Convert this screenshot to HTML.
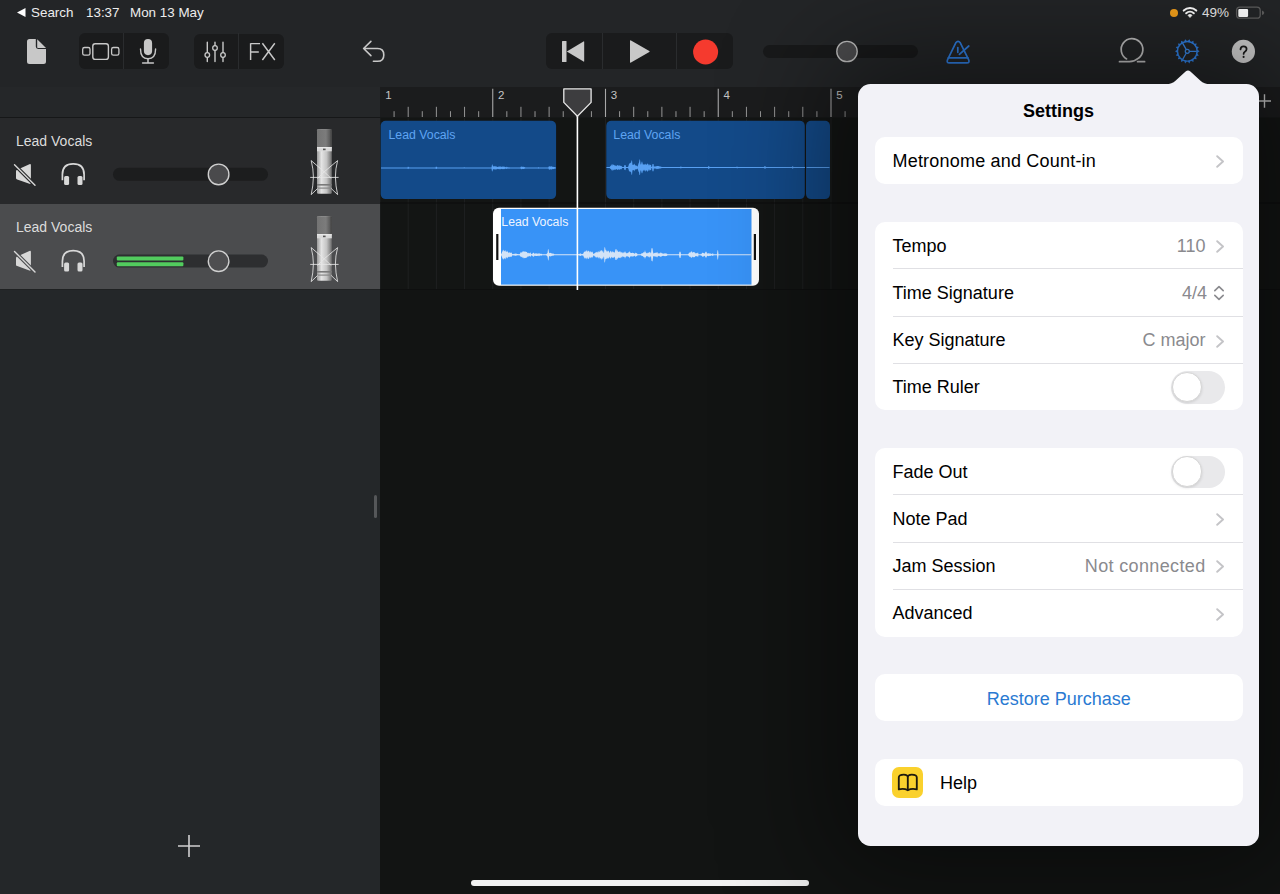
<!DOCTYPE html>
<html><head><meta charset="utf-8">
<style>
*{box-sizing:border-box;margin:0;padding:0}
html,body{width:1280px;height:894px;overflow:hidden;background:#161718;font-family:"Liberation Sans",sans-serif}
.a{position:absolute}
#top{left:0;top:0;width:1280px;height:87px;background:#232527}
#left{left:0;top:87px;width:380px;height:807px;background:#242729}
#tl{left:380px;top:87px;width:900px;height:807px;background:#121413}
.st{color:#ededed;font-size:13.4px;top:4.7px;white-space:nowrap}
.grp{background:#1a1b1c;border-radius:6px}
.div{background:#2a2c2e;width:1px}
.txt{white-space:nowrap}
</style></head><body>
<div id="top" class="a"></div>
<div id="left" class="a"></div>
<div id="tl" class="a"></div>

<!-- status bar -->
<svg class="a" style="left:17px;top:8px" width="9" height="9" viewBox="0 0 9 9"><path d="M0 4.5 L8.5 0 L8.5 9 Z" fill="#fff"/></svg>
<div class="a st" style="left:31px">Search</div>
<div class="a st" style="left:86px">13:37</div>
<div class="a st" style="left:130px">Mon 13 May</div>

<div class="a" style="left:1170px;top:9px;width:8px;height:8px;border-radius:50%;background:#f7a21b"></div>
<svg class="a" style="left:0;top:0" width="1280" height="24" viewBox="0 0 1280 24">
<path d="M1183.73 10.57 A9.2 9.2 0 0 1 1196.27 10.57" stroke="#fff" stroke-width="2" fill="none" stroke-linecap="round"/>
<path d="M1186.18 13.2 A5.6 5.6 0 0 1 1193.82 13.2" stroke="#fff" stroke-width="2" fill="none" stroke-linecap="round"/>
<path d="M1190 17.6 L1187.9 15.3 A3 3 0 0 1 1192.1 15.3 Z" fill="#fff" stroke="#fff" stroke-width="0.6" stroke-linejoin="round"/>
<rect x="1236.6" y="7.2" width="23.6" height="11" rx="3.3" stroke="#5e5e5e" stroke-width="1.3" fill="none"/>
<rect x="1238.3" y="8.9" width="9.8" height="8" rx="1.2" fill="#fff"/>
<path d="M1262 10.4 Q1264.2 11 1264.2 12.7 Q1264.2 14.4 1262 15 Z" fill="#5e5e5e"/>
</svg>
<div class="a st" style="left:1202px;font-size:13.5px;top:4.5px">49%</div>

<!-- toolbar -->
<svg class="a" style="left:0;top:0" width="1280" height="87" viewBox="0 0 1280 87">
<!-- doc -->
<path d="M29.5 39 H35.8 V46.6 Q35.8 49 38.2 49 H46 V61.5 Q46 64 43.5 64 H29.5 Q27 64 27 61.5 V41.5 Q27 39 29.5 39 Z" fill="#c8c8c8"/>
<path d="M37.2 39.3 L46 48 H38 Q37.2 48 37.2 47.2 Z" fill="#c8c8c8"/>
</svg>
<div class="a grp" style="left:79px;top:33px;width:90px;height:36px"></div>
<div class="a div" style="left:123px;top:33px;height:36px"></div>
<div class="a grp" style="left:194px;top:33.5px;width:90px;height:35.5px"></div>
<div class="a div" style="left:238px;top:33px;height:36px"></div>
<div class="a grp" style="left:546px;top:33px;width:187px;height:36px"></div>
<div class="a div" style="left:602px;top:33px;height:36px"></div>
<div class="a div" style="left:676px;top:33px;height:36px"></div>
<div class="a" style="left:763px;top:45px;width:155px;height:12.5px;border-radius:6.5px;background:#18191a"></div>
<svg class="a" style="left:0;top:0" width="1280" height="87" viewBox="0 0 1280 87">
<g stroke="#c8c8c8" fill="none">
<rect x="82.7" y="47.5" width="7.3" height="7.7" rx="1.8" stroke-width="1.3"/>
<rect x="92.8" y="43.8" width="15.6" height="15.6" rx="2.4" stroke-width="1.4"/>
<rect x="111.6" y="47.5" width="7.3" height="7.7" rx="1.8" stroke-width="1.3"/>
<path d="M140.5 49 Q140.5 58.7 148 58.7 Q155.6 58.7 155.6 49" stroke-width="1.4" stroke-linecap="round"/>
<path d="M148 58.7 V62.8 M142.6 63.1 H153.4" stroke-width="1.5" stroke-linecap="round"/>
<path d="M207.3 42.3 V61.5 M215 42.3 V61.5 M223 42.3 V61.5" stroke-width="1.4" stroke-linecap="round"/>
<path d="M250.6 43.2 V60 M250.6 43.6 H260 M250.6 51.9 H258.8 M262.4 43.2 L274.8 60 M274.8 43.2 L262.4 60" stroke-width="1.45"/>
<path d="M370.9 41.4 L363.6 48.5 L370.9 55.6 M363.6 48.5 H377.6 Q383.8 48.5 383.8 54.9 Q383.8 61.3 377.6 61.3 H373.4" stroke-width="1.6" stroke-linecap="round" stroke-linejoin="round"/>
</g>
<rect x="143.9" y="39" width="8.2" height="16.2" rx="4.1" fill="#c8c8c8"/>
<g fill="#1a1b1c" stroke="#c8c8c8" stroke-width="1.3">
<circle cx="207.3" cy="55" r="2.3"/>
<circle cx="215" cy="48" r="2.3"/>
<circle cx="223" cy="55" r="2.3"/>
</g>
<!-- transport -->
<rect x="562" y="41" width="4.5" height="21" rx="0.5" fill="#c8c8c8"/>
<path d="M566.8 51.5 L583.5 41.4 Q584.2 41.1 584.2 41.9 V61.1 Q584.2 61.9 583.5 61.6 Z" fill="#c8c8c8"/>
<path d="M630 41 Q630 39.9 631 40.5 L649.3 50.9 Q650.1 51.4 649.3 51.9 L631 62.5 Q630 63.1 630 62 Z" fill="#c8c8c8"/>
<circle cx="705.6" cy="52" r="12.5" fill="#f53a2e"/>
<circle cx="847" cy="51.5" r="10.2" fill="#4b4b4d" stroke="#bdbdbd" stroke-width="1.35"/>
<!-- metronome -->
<g stroke="#2f7ee0" fill="none" stroke-width="1.7" stroke-linecap="round" stroke-linejoin="round">
<path d="M955.8 42.8 Q958 39.9 960.3 42.8 L968.6 59.6 Q970 62.9 966.8 62.9 H949.4 Q946.2 62.9 947.6 59.6 Z"/>
<path d="M948.3 57.8 H967.9"/>
<path d="M957.8 47.5 V52.3"/>
<path d="M959.4 54.4 L968.8 46"/>
</g>
<!-- loop -->
<g stroke="#c0c0c0" fill="none" stroke-width="1.7" stroke-linecap="round">
<path d="M1126.6 58.9 A10.85 10.85 0 1 1 1138.5 58.2 Q1134.5 61.7 1129.5 61.7 H1119.5"/>
<path d="M1137.6 61.7 H1144.6"/>
</g>
<!-- gear -->
<path d="M1187.94 40.82 L1189.44 39.19 L1190.28 41.23 L1191.49 41.67 L1193.45 40.65 L1193.55 42.86 L1194.53 43.68 L1196.72 43.39 L1196.06 45.50 L1196.70 46.61 L1198.86 47.09 L1197.51 48.85 L1197.73 50.11 L1199.60 51.30 L1197.73 52.49 L1197.51 53.75 L1198.86 55.51 L1196.70 55.99 L1196.06 57.10 L1196.72 59.21 L1194.53 58.92 L1193.55 59.74 L1193.45 61.95 L1191.49 60.93 L1190.28 61.37 L1189.44 63.41 L1187.94 61.78 L1186.66 61.78 L1185.16 63.41 L1184.32 61.37 L1183.11 60.93 L1181.15 61.95 L1181.05 59.74 L1180.07 58.92 L1177.88 59.21 L1178.54 57.10 L1177.90 55.99 L1175.74 55.51 L1177.09 53.75 L1176.87 52.49 L1175.00 51.30 L1176.87 50.11 L1177.09 48.85 L1175.74 47.09 L1177.90 46.61 L1178.54 45.50 L1177.88 43.39 L1180.07 43.68 L1181.05 42.86 L1181.15 40.65 L1183.11 41.67 L1184.32 41.23 L1185.16 39.19 L1186.66 40.82 Z M1196.40 51.3 A9.1 9.1 0 1 0 1178.20 51.3 A9.1 9.1 0 1 0 1196.40 51.3 Z" fill="#2f7fe2" fill-rule="evenodd"/>
<g transform="translate(1187.3 51.3)" stroke="#3a88e6" fill="none">
<circle r="2.0" stroke-width="1.3"/>
<path d="M2.0 0 H9.4 M-1 -1.73 L-4.7 -8.15 M-1 1.73 L-4.7 8.15" stroke-width="1.3"/>
</g>
<circle cx="1243.4" cy="51.4" r="11.6" fill="#cdcdcd"/>
</svg>
<svg class="a" style="left:0;top:0" width="1280" height="87" viewBox="0 0 1280 87"><path d="M1240.5 49.4 Q1240.6 46.3 1243.6 46.3 Q1246.6 46.3 1246.6 49 Q1246.6 50.7 1244.9 51.7 Q1243.6 52.5 1243.6 53.9" stroke="#1a1a1a" stroke-width="1.75" fill="none" stroke-linecap="round"/><circle cx="1243.6" cy="56.9" r="1.05" fill="#1a1a1a"/></svg>

<!-- timeline -->
<div class="a" style="left:380px;top:87px;width:900px;height:30.5px;background:#1b1c1d"></div>
<svg class="a" style="left:0;top:0" width="1280" height="894" viewBox="0 0 1280 894">
<rect x="380" y="117.5" width="900" height="172" fill="#131514"/>
<path d="M380.00 118 V289" stroke="#1f2021" stroke-width="1"/><path d="M408.19 118 V289" stroke="#1f2021" stroke-width="1"/><path d="M436.38 118 V289" stroke="#1f2021" stroke-width="1"/><path d="M464.56 118 V289" stroke="#1f2021" stroke-width="1"/><path d="M492.75 118 V289" stroke="#1f2021" stroke-width="1"/><path d="M520.94 118 V289" stroke="#1f2021" stroke-width="1"/><path d="M549.12 118 V289" stroke="#1f2021" stroke-width="1"/><path d="M577.31 118 V289" stroke="#1f2021" stroke-width="1"/><path d="M605.50 118 V289" stroke="#1f2021" stroke-width="1"/><path d="M633.69 118 V289" stroke="#1f2021" stroke-width="1"/><path d="M661.88 118 V289" stroke="#1f2021" stroke-width="1"/><path d="M690.06 118 V289" stroke="#1f2021" stroke-width="1"/><path d="M718.25 118 V289" stroke="#1f2021" stroke-width="1"/><path d="M746.44 118 V289" stroke="#1f2021" stroke-width="1"/><path d="M774.62 118 V289" stroke="#1f2021" stroke-width="1"/><path d="M802.81 118 V289" stroke="#1f2021" stroke-width="1"/><path d="M831.00 118 V289" stroke="#1f2021" stroke-width="1"/><path d="M859.19 118 V289" stroke="#1f2021" stroke-width="1"/><path d="M887.38 118 V289" stroke="#1f2021" stroke-width="1"/><path d="M915.56 118 V289" stroke="#1f2021" stroke-width="1"/><path d="M943.75 118 V289" stroke="#1f2021" stroke-width="1"/><path d="M971.94 118 V289" stroke="#1f2021" stroke-width="1"/><path d="M1000.12 118 V289" stroke="#1f2021" stroke-width="1"/><path d="M1028.31 118 V289" stroke="#1f2021" stroke-width="1"/><path d="M1056.50 118 V289" stroke="#1f2021" stroke-width="1"/><path d="M1084.69 118 V289" stroke="#1f2021" stroke-width="1"/><path d="M1112.88 118 V289" stroke="#1f2021" stroke-width="1"/><path d="M1141.06 118 V289" stroke="#1f2021" stroke-width="1"/><path d="M1169.25 118 V289" stroke="#1f2021" stroke-width="1"/><path d="M1197.44 118 V289" stroke="#1f2021" stroke-width="1"/><path d="M1225.62 118 V289" stroke="#1f2021" stroke-width="1"/><path d="M1253.81 118 V289" stroke="#1f2021" stroke-width="1"/>
<path d="M380 203 H1280" stroke="#0c0d0d" stroke-width="1"/>
<path d="M380 289.5 H1280" stroke="#0e0f0f" stroke-width="1"/>
<path d="M394.09 111.2 V117" stroke="#959595" stroke-width="1"/><path d="M408.19 106.8 V117" stroke="#959595" stroke-width="1"/><path d="M422.28 111.2 V117" stroke="#959595" stroke-width="1"/><path d="M436.38 106.8 V117" stroke="#959595" stroke-width="1"/><path d="M450.47 111.2 V117" stroke="#959595" stroke-width="1"/><path d="M464.56 106.8 V117" stroke="#959595" stroke-width="1"/><path d="M478.66 111.2 V117" stroke="#959595" stroke-width="1"/><path d="M492.75 88.8 V117" stroke="#a8a8a8" stroke-width="1.1"/><path d="M506.84 111.2 V117" stroke="#959595" stroke-width="1"/><path d="M520.94 106.8 V117" stroke="#959595" stroke-width="1"/><path d="M535.03 111.2 V117" stroke="#959595" stroke-width="1"/><path d="M549.12 106.8 V117" stroke="#959595" stroke-width="1"/><path d="M563.22 111.2 V117" stroke="#959595" stroke-width="1"/><path d="M577.31 106.8 V117" stroke="#959595" stroke-width="1"/><path d="M591.41 111.2 V117" stroke="#959595" stroke-width="1"/><path d="M605.50 88.8 V117" stroke="#a8a8a8" stroke-width="1.1"/><path d="M619.59 111.2 V117" stroke="#959595" stroke-width="1"/><path d="M633.69 106.8 V117" stroke="#959595" stroke-width="1"/><path d="M647.78 111.2 V117" stroke="#959595" stroke-width="1"/><path d="M661.88 106.8 V117" stroke="#959595" stroke-width="1"/><path d="M675.97 111.2 V117" stroke="#959595" stroke-width="1"/><path d="M690.06 106.8 V117" stroke="#959595" stroke-width="1"/><path d="M704.16 111.2 V117" stroke="#959595" stroke-width="1"/><path d="M718.25 88.8 V117" stroke="#a8a8a8" stroke-width="1.1"/><path d="M732.34 111.2 V117" stroke="#959595" stroke-width="1"/><path d="M746.44 106.8 V117" stroke="#959595" stroke-width="1"/><path d="M760.53 111.2 V117" stroke="#959595" stroke-width="1"/><path d="M774.62 106.8 V117" stroke="#959595" stroke-width="1"/><path d="M788.72 111.2 V117" stroke="#959595" stroke-width="1"/><path d="M802.81 106.8 V117" stroke="#959595" stroke-width="1"/><path d="M816.91 111.2 V117" stroke="#959595" stroke-width="1"/><path d="M831.00 88.8 V117" stroke="#a8a8a8" stroke-width="1.1"/><path d="M845.09 111.2 V117" stroke="#959595" stroke-width="1"/><path d="M859.19 106.8 V117" stroke="#959595" stroke-width="1"/><path d="M873.28 111.2 V117" stroke="#959595" stroke-width="1"/><path d="M887.38 106.8 V117" stroke="#959595" stroke-width="1"/><path d="M901.47 111.2 V117" stroke="#959595" stroke-width="1"/><path d="M915.56 106.8 V117" stroke="#959595" stroke-width="1"/><path d="M929.66 111.2 V117" stroke="#959595" stroke-width="1"/><path d="M943.75 88.8 V117" stroke="#a8a8a8" stroke-width="1.1"/><path d="M957.84 111.2 V117" stroke="#959595" stroke-width="1"/><path d="M971.94 106.8 V117" stroke="#959595" stroke-width="1"/><path d="M986.03 111.2 V117" stroke="#959595" stroke-width="1"/><path d="M1000.12 106.8 V117" stroke="#959595" stroke-width="1"/><path d="M1014.22 111.2 V117" stroke="#959595" stroke-width="1"/><path d="M1028.31 106.8 V117" stroke="#959595" stroke-width="1"/><path d="M1042.41 111.2 V117" stroke="#959595" stroke-width="1"/><path d="M1056.50 88.8 V117" stroke="#a8a8a8" stroke-width="1.1"/><path d="M1070.59 111.2 V117" stroke="#959595" stroke-width="1"/><path d="M1084.69 106.8 V117" stroke="#959595" stroke-width="1"/><path d="M1098.78 111.2 V117" stroke="#959595" stroke-width="1"/><path d="M1112.88 106.8 V117" stroke="#959595" stroke-width="1"/><path d="M1126.97 111.2 V117" stroke="#959595" stroke-width="1"/><path d="M1141.06 106.8 V117" stroke="#959595" stroke-width="1"/><path d="M1155.16 111.2 V117" stroke="#959595" stroke-width="1"/><path d="M1169.25 88.8 V117" stroke="#a8a8a8" stroke-width="1.1"/><path d="M1183.34 111.2 V117" stroke="#959595" stroke-width="1"/><path d="M1197.44 106.8 V117" stroke="#959595" stroke-width="1"/><path d="M1211.53 111.2 V117" stroke="#959595" stroke-width="1"/><path d="M1225.62 106.8 V117" stroke="#959595" stroke-width="1"/><path d="M1239.72 111.2 V117" stroke="#959595" stroke-width="1"/>
<!-- regions -->
<rect x="380.7" y="120.8" width="175.4" height="78.3" rx="5" fill="#134a89"/>
<rect x="606.3" y="120.8" width="198.5" height="78.3" rx="5" fill="#134a89"/>
<rect x="806" y="120.8" width="24" height="78.3" rx="5" fill="#134a89"/>
<g fill="#58a0f2">
<path d="M381.0 167.4 L381.5 167.4 L382.0 167.4 L382.5 167.4 L383.0 167.4 L383.5 167.4 L384.0 167.4 L384.5 167.4 L385.0 167.4 L385.5 167.4 L386.0 167.4 L386.5 167.4 L387.0 167.4 L387.5 167.4 L388.0 167.4 L388.5 167.4 L389.0 167.4 L389.5 167.4 L390.0 167.4 L390.5 167.4 L391.0 167.4 L391.5 167.4 L392.0 167.4 L392.5 167.4 L393.0 167.4 L393.5 167.4 L394.0 167.4 L394.5 167.4 L395.0 167.4 L395.5 167.4 L396.0 167.4 L396.5 167.4 L397.0 167.4 L397.5 167.4 L398.0 167.4 L398.5 167.4 L399.0 167.4 L399.5 167.4 L400.0 167.4 L400.5 167.4 L401.0 167.4 L401.5 167.4 L402.0 167.4 L402.5 167.4 L403.0 167.4 L403.5 167.4 L404.0 167.4 L404.5 167.4 L405.0 167.4 L405.5 167.4 L406.0 167.4 L406.5 167.4 L407.0 167.4 L407.5 167.4 L408.0 166.5 L408.5 167.0 L409.0 167.3 L409.5 167.4 L410.0 167.4 L410.5 167.4 L411.0 167.4 L411.5 167.4 L412.0 167.4 L412.5 167.4 L413.0 167.4 L413.5 167.4 L414.0 167.4 L414.5 167.4 L415.0 167.4 L415.5 167.4 L416.0 167.4 L416.5 167.4 L417.0 167.4 L417.5 167.4 L418.0 167.4 L418.5 167.4 L419.0 167.4 L419.5 167.4 L420.0 167.4 L420.5 167.4 L421.0 167.4 L421.5 167.4 L422.0 167.4 L422.5 167.4 L423.0 167.4 L423.5 167.4 L424.0 167.4 L424.5 167.4 L425.0 167.4 L425.5 167.4 L426.0 167.4 L426.5 167.4 L427.0 167.4 L427.5 167.4 L428.0 167.4 L428.5 167.4 L429.0 167.4 L429.5 167.4 L430.0 167.4 L430.5 167.4 L431.0 167.4 L431.5 167.4 L432.0 167.4 L432.5 167.4 L433.0 167.4 L433.5 167.4 L434.0 167.4 L434.5 167.4 L435.0 167.4 L435.5 167.4 L436.0 166.6 L436.5 166.8 L437.0 167.3 L437.5 167.4 L438.0 167.4 L438.5 167.4 L439.0 167.4 L439.5 167.4 L440.0 167.4 L440.5 167.4 L441.0 167.4 L441.5 167.4 L442.0 167.4 L442.5 167.4 L443.0 167.4 L443.5 167.4 L444.0 167.4 L444.5 167.4 L445.0 167.4 L445.5 167.4 L446.0 167.4 L446.5 167.4 L447.0 167.4 L447.5 167.4 L448.0 167.4 L448.5 167.4 L449.0 167.4 L449.5 167.4 L450.0 167.4 L450.5 167.4 L451.0 167.4 L451.5 167.4 L452.0 167.4 L452.5 167.4 L453.0 167.4 L453.5 167.4 L454.0 167.4 L454.5 167.4 L455.0 167.4 L455.5 167.4 L456.0 167.4 L456.5 167.4 L457.0 167.4 L457.5 167.4 L458.0 167.4 L458.5 167.4 L459.0 167.4 L459.5 167.4 L460.0 167.4 L460.5 167.4 L461.0 167.4 L461.5 167.4 L462.0 167.4 L462.5 167.4 L463.0 167.4 L463.5 167.4 L464.0 167.2 L464.5 167.2 L465.0 167.4 L465.5 167.4 L466.0 167.4 L466.5 167.4 L467.0 167.4 L467.5 167.4 L468.0 167.4 L468.5 167.4 L469.0 167.4 L469.5 167.4 L470.0 167.4 L470.5 167.4 L471.0 167.4 L471.5 167.4 L472.0 167.4 L472.5 167.4 L473.0 167.4 L473.5 167.4 L474.0 167.4 L474.5 167.4 L475.0 167.4 L475.5 167.4 L476.0 167.4 L476.5 167.4 L477.0 167.4 L477.5 167.4 L478.0 167.4 L478.5 167.4 L479.0 167.4 L479.5 167.4 L480.0 167.4 L480.5 167.4 L481.0 167.4 L481.5 167.4 L482.0 167.4 L482.5 167.4 L483.0 167.4 L483.5 167.4 L484.0 167.4 L484.5 167.4 L485.0 167.4 L485.5 167.4 L486.0 167.4 L486.5 167.4 L487.0 167.4 L487.5 167.4 L488.0 167.4 L488.5 167.4 L489.0 167.4 L489.5 167.4 L490.0 167.4 L490.5 167.4 L491.0 167.4 L491.5 167.4 L492.0 164.4 L492.5 164.4 L493.0 166.6 L493.5 166.6 L494.0 165.8 L494.5 166.7 L495.0 165.8 L495.5 166.2 L496.0 167.0 L496.5 166.2 L497.0 166.7 L497.5 166.9 L498.0 166.9 L498.5 166.6 L499.0 166.8 L499.5 166.5 L500.0 166.4 L500.5 166.6 L501.0 166.8 L501.5 166.7 L502.0 167.1 L502.5 166.5 L503.0 166.6 L503.5 166.5 L504.0 166.9 L504.5 166.6 L505.0 167.1 L505.5 167.1 L506.0 167.4 L506.5 166.8 L507.0 166.8 L507.5 167.2 L508.0 167.3 L508.5 167.4 L509.0 166.9 L509.5 167.4 L510.0 167.4 L510.5 167.4 L511.0 167.4 L511.5 167.4 L512.0 167.4 L512.5 167.4 L513.0 167.4 L513.5 167.4 L514.0 167.4 L514.5 167.4 L515.0 167.4 L515.5 167.4 L516.0 167.4 L516.5 167.4 L517.0 167.4 L517.5 167.4 L518.0 167.4 L518.5 167.4 L519.0 167.4 L519.5 167.4 L520.0 167.4 L520.5 167.3 L521.0 166.4 L521.5 166.5 L522.0 166.9 L522.5 166.8 L523.0 166.8 L523.5 166.8 L524.0 166.9 L524.5 167.1 L525.0 167.2 L525.5 167.4 L526.0 167.4 L526.5 167.4 L527.0 167.4 L527.5 167.4 L528.0 167.4 L528.5 167.4 L529.0 167.4 L529.5 167.4 L530.0 167.4 L530.5 167.4 L531.0 167.4 L531.5 167.4 L532.0 167.4 L532.5 167.4 L533.0 167.4 L533.5 167.4 L534.0 167.4 L534.5 167.4 L535.0 167.4 L535.5 167.4 L536.0 167.4 L536.5 167.4 L537.0 167.4 L537.5 167.4 L538.0 167.4 L538.5 167.1 L539.0 167.4 L539.5 167.4 L540.0 167.4 L540.5 167.4 L541.0 167.4 L541.5 167.4 L542.0 167.4 L542.5 167.4 L543.0 167.4 L543.5 167.4 L544.0 167.4 L544.5 167.4 L545.0 167.4 L545.5 167.4 L546.0 167.4 L546.5 167.4 L547.0 167.4 L547.5 167.4 L548.0 167.4 L548.5 167.3 L549.0 166.1 L549.5 166.5 L550.0 166.5 L550.5 166.5 L551.0 166.5 L551.5 166.3 L552.0 166.4 L552.5 167.1 L553.0 166.6 L553.5 166.9 L554.0 167.0 L554.5 166.9 L555.0 167.3 L555.5 167.4 L556.0 167.2 L556.0 168.6 L555.5 168.5 L555.0 168.4 L554.5 168.8 L554.0 168.9 L553.5 168.9 L553.0 169.2 L552.5 168.8 L552.0 169.4 L551.5 169.4 L551.0 169.2 L550.5 169.3 L550.0 169.4 L549.5 169.4 L549.0 169.8 L548.5 168.4 L548.0 168.4 L547.5 168.4 L547.0 168.4 L546.5 168.4 L546.0 168.4 L545.5 168.4 L545.0 168.4 L544.5 168.4 L544.0 168.4 L543.5 168.4 L543.0 168.4 L542.5 168.4 L542.0 168.4 L541.5 168.4 L541.0 168.4 L540.5 168.4 L540.0 168.4 L539.5 168.4 L539.0 168.4 L538.5 168.7 L538.0 168.4 L537.5 168.4 L537.0 168.4 L536.5 168.4 L536.0 168.4 L535.5 168.4 L535.0 168.4 L534.5 168.4 L534.0 168.4 L533.5 168.4 L533.0 168.4 L532.5 168.4 L532.0 168.4 L531.5 168.4 L531.0 168.4 L530.5 168.4 L530.0 168.4 L529.5 168.4 L529.0 168.4 L528.5 168.4 L528.0 168.4 L527.5 168.4 L527.0 168.4 L526.5 168.4 L526.0 168.4 L525.5 168.4 L525.0 168.6 L524.5 168.7 L524.0 168.9 L523.5 169.1 L523.0 169.1 L522.5 169.1 L522.0 168.8 L521.5 169.3 L521.0 169.3 L520.5 168.6 L520.0 168.4 L519.5 168.4 L519.0 168.4 L518.5 168.4 L518.0 168.4 L517.5 168.4 L517.0 168.4 L516.5 168.4 L516.0 168.4 L515.5 168.4 L515.0 168.4 L514.5 168.4 L514.0 168.4 L513.5 168.4 L513.0 168.4 L512.5 168.4 L512.0 168.4 L511.5 168.4 L511.0 168.4 L510.5 168.4 L510.0 168.4 L509.5 168.4 L509.0 168.9 L508.5 168.4 L508.0 168.5 L507.5 168.5 L507.0 168.9 L506.5 168.9 L506.0 168.4 L505.5 168.7 L505.0 168.7 L504.5 169.3 L504.0 168.8 L503.5 169.3 L503.0 169.1 L502.5 169.2 L502.0 168.8 L501.5 169.1 L501.0 169.1 L500.5 169.2 L500.0 169.3 L499.5 169.3 L499.0 169.1 L498.5 169.3 L498.0 168.8 L497.5 168.9 L497.0 169.2 L496.5 169.5 L496.0 168.9 L495.5 169.5 L495.0 169.8 L494.5 169.1 L494.0 169.8 L493.5 169.1 L493.0 169.2 L492.5 171.2 L492.0 171.6 L491.5 168.4 L491.0 168.4 L490.5 168.4 L490.0 168.4 L489.5 168.4 L489.0 168.4 L488.5 168.4 L488.0 168.4 L487.5 168.4 L487.0 168.4 L486.5 168.4 L486.0 168.4 L485.5 168.4 L485.0 168.4 L484.5 168.4 L484.0 168.4 L483.5 168.4 L483.0 168.4 L482.5 168.4 L482.0 168.4 L481.5 168.4 L481.0 168.4 L480.5 168.4 L480.0 168.4 L479.5 168.4 L479.0 168.4 L478.5 168.4 L478.0 168.4 L477.5 168.4 L477.0 168.4 L476.5 168.4 L476.0 168.4 L475.5 168.4 L475.0 168.4 L474.5 168.4 L474.0 168.4 L473.5 168.4 L473.0 168.4 L472.5 168.4 L472.0 168.4 L471.5 168.4 L471.0 168.4 L470.5 168.4 L470.0 168.4 L469.5 168.4 L469.0 168.4 L468.5 168.4 L468.0 168.4 L467.5 168.4 L467.0 168.4 L466.5 168.4 L466.0 168.4 L465.5 168.4 L465.0 168.4 L464.5 168.6 L464.0 168.5 L463.5 168.4 L463.0 168.4 L462.5 168.4 L462.0 168.4 L461.5 168.4 L461.0 168.4 L460.5 168.4 L460.0 168.4 L459.5 168.4 L459.0 168.4 L458.5 168.4 L458.0 168.4 L457.5 168.4 L457.0 168.4 L456.5 168.4 L456.0 168.4 L455.5 168.4 L455.0 168.4 L454.5 168.4 L454.0 168.4 L453.5 168.4 L453.0 168.4 L452.5 168.4 L452.0 168.4 L451.5 168.4 L451.0 168.4 L450.5 168.4 L450.0 168.4 L449.5 168.4 L449.0 168.4 L448.5 168.4 L448.0 168.4 L447.5 168.4 L447.0 168.4 L446.5 168.4 L446.0 168.4 L445.5 168.4 L445.0 168.4 L444.5 168.4 L444.0 168.4 L443.5 168.4 L443.0 168.4 L442.5 168.4 L442.0 168.4 L441.5 168.4 L441.0 168.4 L440.5 168.4 L440.0 168.4 L439.5 168.4 L439.0 168.4 L438.5 168.4 L438.0 168.4 L437.5 168.4 L437.0 168.4 L436.5 169.0 L436.0 169.1 L435.5 168.4 L435.0 168.4 L434.5 168.4 L434.0 168.4 L433.5 168.4 L433.0 168.4 L432.5 168.4 L432.0 168.4 L431.5 168.4 L431.0 168.4 L430.5 168.4 L430.0 168.4 L429.5 168.4 L429.0 168.4 L428.5 168.4 L428.0 168.4 L427.5 168.4 L427.0 168.4 L426.5 168.4 L426.0 168.4 L425.5 168.4 L425.0 168.4 L424.5 168.4 L424.0 168.4 L423.5 168.4 L423.0 168.4 L422.5 168.4 L422.0 168.4 L421.5 168.4 L421.0 168.4 L420.5 168.4 L420.0 168.4 L419.5 168.4 L419.0 168.4 L418.5 168.4 L418.0 168.4 L417.5 168.4 L417.0 168.4 L416.5 168.4 L416.0 168.4 L415.5 168.4 L415.0 168.4 L414.5 168.4 L414.0 168.4 L413.5 168.4 L413.0 168.4 L412.5 168.4 L412.0 168.4 L411.5 168.4 L411.0 168.4 L410.5 168.4 L410.0 168.4 L409.5 168.4 L409.0 168.4 L408.5 168.8 L408.0 169.3 L407.5 168.4 L407.0 168.4 L406.5 168.4 L406.0 168.4 L405.5 168.4 L405.0 168.4 L404.5 168.4 L404.0 168.4 L403.5 168.4 L403.0 168.4 L402.5 168.4 L402.0 168.4 L401.5 168.4 L401.0 168.4 L400.5 168.4 L400.0 168.4 L399.5 168.4 L399.0 168.4 L398.5 168.4 L398.0 168.4 L397.5 168.4 L397.0 168.4 L396.5 168.4 L396.0 168.4 L395.5 168.4 L395.0 168.4 L394.5 168.4 L394.0 168.4 L393.5 168.4 L393.0 168.4 L392.5 168.4 L392.0 168.4 L391.5 168.4 L391.0 168.4 L390.5 168.4 L390.0 168.4 L389.5 168.4 L389.0 168.4 L388.5 168.4 L388.0 168.4 L387.5 168.4 L387.0 168.4 L386.5 168.4 L386.0 168.4 L385.5 168.4 L385.0 168.4 L384.5 168.4 L384.0 168.4 L383.5 168.4 L383.0 168.4 L382.5 168.4 L382.0 168.4 L381.5 168.4 L381.0 168.4 Z"/>
<path d="M606.5 167.0 L607.0 167.0 L607.5 167.0 L608.0 167.0 L608.5 167.0 L609.0 167.0 L609.5 166.9 L610.0 166.7 L610.5 165.8 L611.0 165.7 L611.5 164.1 L612.0 166.0 L612.5 164.6 L613.0 164.1 L613.5 165.1 L614.0 165.1 L614.5 165.6 L615.0 165.2 L615.5 165.5 L616.0 166.2 L616.5 166.1 L617.0 165.0 L617.5 165.1 L618.0 165.7 L618.5 165.5 L619.0 165.5 L619.5 165.4 L620.0 165.6 L620.5 165.7 L621.0 166.2 L621.5 165.7 L622.0 166.8 L622.5 167.0 L623.0 167.0 L623.5 167.0 L624.0 167.0 L624.5 165.0 L625.0 165.0 L625.5 165.0 L626.0 166.9 L626.5 166.9 L627.0 166.9 L627.5 167.0 L628.0 167.0 L628.5 165.7 L629.0 164.0 L629.5 163.2 L630.0 163.6 L630.5 162.6 L631.0 163.1 L631.5 160.5 L632.0 160.5 L632.5 164.9 L633.0 164.7 L633.5 164.7 L634.0 164.6 L634.5 163.4 L635.0 165.6 L635.5 165.5 L636.0 165.1 L636.5 165.9 L637.0 165.8 L637.5 166.7 L638.0 165.3 L638.5 163.6 L639.0 162.5 L639.5 159.5 L640.0 159.5 L640.5 164.0 L641.0 164.7 L641.5 162.4 L642.0 161.2 L642.5 163.0 L643.0 164.9 L643.5 163.7 L644.0 165.3 L644.5 163.8 L645.0 165.1 L645.5 163.4 L646.0 164.7 L646.5 164.5 L647.0 164.6 L647.5 163.3 L648.0 164.1 L648.5 164.4 L649.0 165.7 L649.5 164.4 L650.0 164.6 L650.5 165.1 L651.0 165.0 L651.5 167.0 L652.0 167.0 L652.5 164.0 L653.0 164.0 L653.5 164.0 L654.0 167.0 L654.5 166.5 L655.0 165.8 L655.5 166.5 L656.0 166.7 L656.5 165.9 L657.0 165.9 L657.5 166.1 L658.0 165.9 L658.5 166.1 L659.0 166.3 L659.5 166.3 L660.0 166.7 L660.5 166.4 L661.0 166.5 L661.5 167.0 L662.0 167.0 L662.5 167.0 L663.0 167.0 L663.5 167.0 L664.0 167.0 L664.5 167.0 L665.0 167.0 L665.5 167.0 L666.0 167.0 L666.5 167.0 L667.0 167.0 L667.5 167.0 L668.0 167.0 L668.5 167.0 L669.0 167.0 L669.5 167.0 L670.0 167.0 L670.5 167.0 L671.0 167.0 L671.5 167.0 L672.0 167.0 L672.5 167.0 L673.0 167.0 L673.5 167.0 L674.0 167.0 L674.5 167.0 L675.0 167.0 L675.5 167.0 L676.0 167.0 L676.5 167.0 L677.0 167.0 L677.5 167.0 L678.0 167.0 L678.5 167.0 L679.0 167.0 L679.5 167.0 L680.0 167.0 L680.5 166.5 L681.0 166.8 L681.5 166.7 L682.0 167.0 L682.5 167.0 L683.0 167.0 L683.5 167.0 L684.0 167.0 L684.5 167.0 L685.0 167.0 L685.5 167.0 L686.0 167.0 L686.5 167.0 L687.0 167.0 L687.5 167.0 L688.0 167.0 L688.5 167.0 L689.0 167.0 L689.5 167.0 L690.0 167.0 L690.5 167.0 L691.0 167.0 L691.5 167.0 L692.0 167.0 L692.5 167.0 L693.0 167.0 L693.5 167.0 L694.0 167.0 L694.5 167.0 L695.0 167.0 L695.5 167.0 L696.0 167.0 L696.5 167.0 L697.0 167.0 L697.5 167.0 L698.0 167.0 L698.5 167.0 L699.0 167.0 L699.5 167.0 L700.0 167.0 L700.5 167.0 L701.0 167.0 L701.5 167.0 L702.0 167.0 L702.5 167.0 L703.0 167.0 L703.5 167.0 L704.0 167.0 L704.5 167.0 L705.0 167.0 L705.5 167.0 L706.0 167.0 L706.5 167.0 L707.0 167.0 L707.5 167.0 L708.0 167.0 L708.5 165.8 L709.0 166.4 L709.5 166.8 L710.0 167.0 L710.5 167.0 L711.0 167.0 L711.5 167.0 L712.0 167.0 L712.5 167.0 L713.0 167.0 L713.5 167.0 L714.0 167.0 L714.5 167.0 L715.0 167.0 L715.5 167.0 L716.0 167.0 L716.5 167.0 L717.0 167.0 L717.5 167.0 L718.0 167.0 L718.5 167.0 L719.0 167.0 L719.5 167.0 L720.0 167.0 L720.5 167.0 L721.0 167.0 L721.5 167.0 L722.0 167.0 L722.5 167.0 L723.0 167.0 L723.5 167.0 L724.0 167.0 L724.5 167.0 L725.0 167.0 L725.5 167.0 L726.0 167.0 L726.5 167.0 L727.0 167.0 L727.5 167.0 L728.0 167.0 L728.5 167.0 L729.0 167.0 L729.5 167.0 L730.0 167.0 L730.5 167.0 L731.0 167.0 L731.5 167.0 L732.0 167.0 L732.5 167.0 L733.0 167.0 L733.5 167.0 L734.0 167.0 L734.5 167.0 L735.0 167.0 L735.5 167.0 L736.0 167.0 L736.5 166.8 L737.0 166.8 L737.5 166.7 L738.0 167.0 L738.5 167.0 L739.0 167.0 L739.5 167.0 L740.0 167.0 L740.5 167.0 L741.0 167.0 L741.5 167.0 L742.0 167.0 L742.5 167.0 L743.0 167.0 L743.5 167.0 L744.0 167.0 L744.5 167.0 L745.0 167.0 L745.5 167.0 L746.0 167.0 L746.5 167.0 L747.0 167.0 L747.5 167.0 L748.0 167.0 L748.5 167.0 L749.0 167.0 L749.5 167.0 L750.0 167.0 L750.5 167.0 L751.0 167.0 L751.5 167.0 L752.0 167.0 L752.5 167.0 L753.0 167.0 L753.5 167.0 L754.0 167.0 L754.5 167.0 L755.0 167.0 L755.5 167.0 L756.0 167.0 L756.5 167.0 L757.0 167.0 L757.5 167.0 L758.0 167.0 L758.5 167.0 L759.0 167.0 L759.5 167.0 L760.0 167.0 L760.5 167.0 L761.0 167.0 L761.5 167.0 L762.0 167.0 L762.5 167.0 L763.0 167.0 L763.5 167.0 L764.0 167.0 L764.5 166.3 L765.0 166.1 L765.5 166.5 L766.0 167.0 L766.5 167.0 L767.0 167.0 L767.5 167.0 L768.0 167.0 L768.5 167.0 L769.0 167.0 L769.5 167.0 L770.0 167.0 L770.5 167.0 L771.0 167.0 L771.5 167.0 L772.0 167.0 L772.5 167.0 L773.0 167.0 L773.5 167.0 L774.0 167.0 L774.5 167.0 L775.0 167.0 L775.5 167.0 L776.0 167.0 L776.5 167.0 L777.0 167.0 L777.5 167.0 L778.0 167.0 L778.5 167.0 L779.0 167.0 L779.5 167.0 L780.0 167.0 L780.5 167.0 L781.0 167.0 L781.5 167.0 L782.0 167.0 L782.5 167.0 L783.0 167.0 L783.5 167.0 L784.0 167.0 L784.5 167.0 L785.0 167.0 L785.5 167.0 L786.0 167.0 L786.5 167.0 L787.0 167.0 L787.5 167.0 L788.0 167.0 L788.5 167.0 L789.0 167.0 L789.5 167.0 L790.0 167.0 L790.5 167.0 L791.0 167.0 L791.5 167.0 L792.0 167.0 L792.5 166.0 L793.0 166.5 L793.5 167.0 L794.0 167.0 L794.5 167.0 L795.0 167.0 L795.5 167.0 L796.0 167.0 L796.5 167.0 L797.0 167.0 L797.5 167.0 L798.0 167.0 L798.5 167.0 L799.0 167.0 L799.5 167.0 L800.0 167.0 L800.5 167.0 L801.0 167.0 L801.5 167.0 L802.0 167.0 L802.5 167.0 L803.0 167.0 L803.5 167.0 L804.0 167.0 L804.5 167.0 L805.0 167.0 L805.0 168.0 L804.5 168.0 L804.0 168.0 L803.5 168.0 L803.0 168.0 L802.5 168.0 L802.0 168.0 L801.5 168.0 L801.0 168.0 L800.5 168.0 L800.0 168.0 L799.5 168.0 L799.0 168.0 L798.5 168.0 L798.0 168.0 L797.5 168.0 L797.0 168.0 L796.5 168.0 L796.0 168.0 L795.5 168.0 L795.0 168.0 L794.5 168.0 L794.0 168.0 L793.5 168.0 L793.0 168.4 L792.5 168.8 L792.0 168.0 L791.5 168.0 L791.0 168.0 L790.5 168.0 L790.0 168.0 L789.5 168.0 L789.0 168.0 L788.5 168.0 L788.0 168.0 L787.5 168.0 L787.0 168.0 L786.5 168.0 L786.0 168.0 L785.5 168.0 L785.0 168.0 L784.5 168.0 L784.0 168.0 L783.5 168.0 L783.0 168.0 L782.5 168.0 L782.0 168.0 L781.5 168.0 L781.0 168.0 L780.5 168.0 L780.0 168.0 L779.5 168.0 L779.0 168.0 L778.5 168.0 L778.0 168.0 L777.5 168.0 L777.0 168.0 L776.5 168.0 L776.0 168.0 L775.5 168.0 L775.0 168.0 L774.5 168.0 L774.0 168.0 L773.5 168.0 L773.0 168.0 L772.5 168.0 L772.0 168.0 L771.5 168.0 L771.0 168.0 L770.5 168.0 L770.0 168.0 L769.5 168.0 L769.0 168.0 L768.5 168.0 L768.0 168.0 L767.5 168.0 L767.0 168.0 L766.5 168.0 L766.0 168.0 L765.5 168.5 L765.0 168.8 L764.5 168.6 L764.0 168.0 L763.5 168.0 L763.0 168.0 L762.5 168.0 L762.0 168.0 L761.5 168.0 L761.0 168.0 L760.5 168.0 L760.0 168.0 L759.5 168.0 L759.0 168.0 L758.5 168.0 L758.0 168.0 L757.5 168.0 L757.0 168.0 L756.5 168.0 L756.0 168.0 L755.5 168.0 L755.0 168.0 L754.5 168.0 L754.0 168.0 L753.5 168.0 L753.0 168.0 L752.5 168.0 L752.0 168.0 L751.5 168.0 L751.0 168.0 L750.5 168.0 L750.0 168.0 L749.5 168.0 L749.0 168.0 L748.5 168.0 L748.0 168.0 L747.5 168.0 L747.0 168.0 L746.5 168.0 L746.0 168.0 L745.5 168.0 L745.0 168.0 L744.5 168.0 L744.0 168.0 L743.5 168.0 L743.0 168.0 L742.5 168.0 L742.0 168.0 L741.5 168.0 L741.0 168.0 L740.5 168.0 L740.0 168.0 L739.5 168.0 L739.0 168.0 L738.5 168.0 L738.0 168.0 L737.5 168.3 L737.0 168.2 L736.5 168.1 L736.0 168.0 L735.5 168.0 L735.0 168.0 L734.5 168.0 L734.0 168.0 L733.5 168.0 L733.0 168.0 L732.5 168.0 L732.0 168.0 L731.5 168.0 L731.0 168.0 L730.5 168.0 L730.0 168.0 L729.5 168.0 L729.0 168.0 L728.5 168.0 L728.0 168.0 L727.5 168.0 L727.0 168.0 L726.5 168.0 L726.0 168.0 L725.5 168.0 L725.0 168.0 L724.5 168.0 L724.0 168.0 L723.5 168.0 L723.0 168.0 L722.5 168.0 L722.0 168.0 L721.5 168.0 L721.0 168.0 L720.5 168.0 L720.0 168.0 L719.5 168.0 L719.0 168.0 L718.5 168.0 L718.0 168.0 L717.5 168.0 L717.0 168.0 L716.5 168.0 L716.0 168.0 L715.5 168.0 L715.0 168.0 L714.5 168.0 L714.0 168.0 L713.5 168.0 L713.0 168.0 L712.5 168.0 L712.0 168.0 L711.5 168.0 L711.0 168.0 L710.5 168.0 L710.0 168.0 L709.5 168.2 L709.0 168.5 L708.5 169.2 L708.0 168.0 L707.5 168.0 L707.0 168.0 L706.5 168.0 L706.0 168.0 L705.5 168.0 L705.0 168.0 L704.5 168.0 L704.0 168.0 L703.5 168.0 L703.0 168.0 L702.5 168.0 L702.0 168.0 L701.5 168.0 L701.0 168.0 L700.5 168.0 L700.0 168.0 L699.5 168.0 L699.0 168.0 L698.5 168.0 L698.0 168.0 L697.5 168.0 L697.0 168.0 L696.5 168.0 L696.0 168.0 L695.5 168.0 L695.0 168.0 L694.5 168.0 L694.0 168.0 L693.5 168.0 L693.0 168.0 L692.5 168.0 L692.0 168.0 L691.5 168.0 L691.0 168.0 L690.5 168.0 L690.0 168.0 L689.5 168.0 L689.0 168.0 L688.5 168.0 L688.0 168.0 L687.5 168.0 L687.0 168.0 L686.5 168.0 L686.0 168.0 L685.5 168.0 L685.0 168.0 L684.5 168.0 L684.0 168.0 L683.5 168.0 L683.0 168.0 L682.5 168.0 L682.0 168.0 L681.5 168.3 L681.0 168.1 L680.5 168.5 L680.0 168.0 L679.5 168.0 L679.0 168.0 L678.5 168.0 L678.0 168.0 L677.5 168.0 L677.0 168.0 L676.5 168.0 L676.0 168.0 L675.5 168.0 L675.0 168.0 L674.5 168.0 L674.0 168.0 L673.5 168.0 L673.0 168.0 L672.5 168.0 L672.0 168.0 L671.5 168.0 L671.0 168.0 L670.5 168.0 L670.0 168.0 L669.5 168.0 L669.0 168.0 L668.5 168.0 L668.0 168.0 L667.5 168.0 L667.0 168.0 L666.5 168.0 L666.0 168.0 L665.5 168.0 L665.0 168.0 L664.5 168.0 L664.0 168.0 L663.5 168.0 L663.0 168.0 L662.5 168.0 L662.0 168.0 L661.5 168.0 L661.0 168.6 L660.5 168.6 L660.0 168.3 L659.5 168.7 L659.0 168.6 L658.5 168.7 L658.0 169.2 L657.5 168.8 L657.0 169.1 L656.5 169.2 L656.0 168.3 L655.5 168.5 L655.0 169.3 L654.5 168.5 L654.0 168.0 L653.5 171.2 L653.0 171.2 L652.5 171.2 L652.0 168.0 L651.5 168.0 L651.0 170.3 L650.5 170.1 L650.0 170.3 L649.5 170.7 L649.0 169.1 L648.5 170.4 L648.0 170.9 L647.5 171.9 L647.0 170.4 L646.5 170.4 L646.0 170.5 L645.5 172.0 L645.0 169.7 L644.5 171.2 L644.0 169.5 L643.5 171.1 L643.0 170.2 L642.5 172.5 L642.0 173.4 L641.5 172.5 L641.0 170.2 L640.5 170.8 L640.0 174.9 L639.5 175.0 L639.0 172.3 L638.5 171.6 L638.0 169.8 L637.5 168.4 L637.0 169.1 L636.5 169.1 L636.0 169.9 L635.5 169.3 L635.0 169.3 L634.5 171.4 L634.0 170.2 L633.5 170.1 L633.0 170.6 L632.5 169.9 L632.0 175.1 L631.5 174.6 L631.0 171.8 L630.5 172.3 L630.0 171.0 L629.5 171.8 L629.0 171.0 L628.5 169.2 L628.0 168.0 L627.5 168.0 L627.0 168.1 L626.5 168.1 L626.0 168.1 L625.5 170.2 L625.0 170.1 L624.5 170.0 L624.0 168.0 L623.5 168.0 L623.0 168.0 L622.5 168.0 L622.0 168.2 L621.5 169.4 L621.0 168.9 L620.5 169.2 L620.0 169.5 L619.5 169.7 L619.0 169.6 L618.5 169.6 L618.0 169.2 L617.5 170.1 L617.0 170.1 L616.5 168.9 L616.0 168.9 L615.5 169.7 L615.0 169.9 L614.5 169.5 L614.0 169.7 L613.5 169.7 L613.0 170.7 L612.5 170.6 L612.0 169.0 L611.5 170.7 L611.0 169.1 L610.5 169.1 L610.0 168.3 L609.5 168.1 L609.0 168.0 L608.5 168.0 L608.0 168.0 L607.5 168.0 L607.0 168.0 L606.5 168.0 Z"/>
<path d="M806.5 167.0 L807.0 167.0 L807.5 167.0 L808.0 167.0 L808.5 167.0 L809.0 167.0 L809.5 167.0 L810.0 167.0 L810.5 167.0 L811.0 167.0 L811.5 167.0 L812.0 167.0 L812.5 167.0 L813.0 167.0 L813.5 167.0 L814.0 167.0 L814.5 167.0 L815.0 167.0 L815.5 167.0 L816.0 167.0 L816.5 167.0 L817.0 167.0 L817.5 167.0 L818.0 167.0 L818.5 167.0 L819.0 167.0 L819.5 167.0 L820.0 167.0 L820.5 167.0 L821.0 167.0 L821.5 167.0 L822.0 167.0 L822.5 167.0 L823.0 167.0 L823.5 167.0 L824.0 167.0 L824.5 167.0 L825.0 167.0 L825.5 167.0 L826.0 167.0 L826.5 167.0 L827.0 167.0 L827.5 167.0 L828.0 167.0 L828.5 167.0 L829.0 167.0 L829.5 167.0 L829.5 168.0 L829.0 168.0 L828.5 168.0 L828.0 168.0 L827.5 168.0 L827.0 168.0 L826.5 168.0 L826.0 168.0 L825.5 168.0 L825.0 168.0 L824.5 168.0 L824.0 168.0 L823.5 168.0 L823.0 168.0 L822.5 168.0 L822.0 168.0 L821.5 168.0 L821.0 168.0 L820.5 168.0 L820.0 168.0 L819.5 168.0 L819.0 168.0 L818.5 168.0 L818.0 168.0 L817.5 168.0 L817.0 168.0 L816.5 168.0 L816.0 168.0 L815.5 168.0 L815.0 168.0 L814.5 168.0 L814.0 168.0 L813.5 168.0 L813.0 168.0 L812.5 168.0 L812.0 168.0 L811.5 168.0 L811.0 168.0 L810.5 168.0 L810.0 168.0 L809.5 168.0 L809.0 168.0 L808.5 168.0 L808.0 168.0 L807.5 168.0 L807.0 168.0 L806.5 168.0 Z"/>
</g>
<rect x="493" y="207.8" width="266" height="78" rx="6" fill="#ffffff"/>
<rect x="501" y="209" width="250.5" height="75.6" fill="#3893f7"/>
<rect x="496.2" y="234" width="2.2" height="26" fill="#111"/>
<rect x="753.8" y="234" width="2.2" height="26" fill="#111"/>
<path d="M501.0 254.2 L501.5 253.4 L502.0 252.2 L502.5 251.2 L503.0 250.0 L503.5 249.8 L504.0 251.4 L504.5 250.9 L505.0 250.6 L505.5 250.2 L506.0 252.2 L506.5 251.7 L507.0 250.5 L507.5 251.4 L508.0 252.2 L508.5 252.4 L509.0 253.2 L509.5 252.1 L510.0 252.5 L510.5 252.8 L511.0 252.9 L511.5 252.2 L512.0 253.6 L512.5 254.2 L513.0 254.0 L513.5 253.9 L514.0 253.8 L514.5 253.9 L515.0 253.6 L515.5 253.7 L516.0 253.6 L516.5 253.7 L517.0 254.0 L517.5 254.1 L518.0 254.1 L518.5 254.2 L519.0 254.0 L519.5 254.2 L520.0 253.7 L520.5 252.6 L521.0 251.9 L521.5 252.6 L522.0 252.7 L522.5 251.0 L523.0 252.3 L523.5 251.2 L524.0 250.9 L524.5 251.9 L525.0 251.3 L525.5 251.8 L526.0 251.7 L526.5 252.1 L527.0 251.9 L527.5 253.2 L528.0 252.8 L528.5 252.8 L529.0 253.6 L529.5 252.7 L530.0 253.7 L530.5 251.9 L531.0 253.6 L531.5 254.2 L532.0 253.9 L532.5 253.6 L533.0 253.1 L533.5 252.7 L534.0 252.7 L534.5 253.9 L535.0 253.4 L535.5 253.6 L536.0 253.3 L536.5 253.6 L537.0 253.4 L537.5 253.7 L538.0 253.6 L538.5 253.8 L539.0 253.1 L539.5 253.5 L540.0 254.0 L540.5 253.8 L541.0 253.8 L541.5 253.8 L542.0 254.2 L542.5 254.2 L543.0 254.2 L543.5 254.2 L544.0 254.2 L544.5 254.2 L545.0 254.2 L545.5 254.2 L546.0 254.2 L546.5 253.9 L547.0 253.4 L547.5 253.0 L548.0 249.2 L548.5 249.2 L549.0 252.6 L549.5 253.2 L550.0 253.1 L550.5 252.7 L551.0 253.2 L551.5 253.3 L552.0 253.6 L552.5 253.8 L553.0 253.3 L553.5 253.8 L554.0 254.1 L554.5 254.2 L555.0 254.2 L555.5 254.2 L556.0 254.2 L556.5 254.2 L557.0 254.2 L557.5 254.2 L558.0 254.2 L558.5 254.2 L559.0 254.2 L559.5 254.2 L560.0 254.2 L560.5 254.2 L561.0 254.2 L561.5 254.2 L562.0 254.2 L562.5 254.2 L563.0 254.2 L563.5 254.2 L564.0 254.2 L564.5 254.2 L565.0 254.2 L565.5 254.2 L566.0 254.2 L566.5 254.2 L567.0 254.2 L567.5 254.2 L568.0 254.2 L568.5 254.2 L569.0 254.2 L569.5 254.2 L570.0 254.2 L570.5 254.2 L571.0 254.2 L571.5 254.2 L572.0 254.2 L572.5 254.2 L573.0 254.2 L573.5 254.2 L574.0 254.2 L574.5 254.2 L575.0 254.2 L575.5 254.2 L576.0 254.2 L576.5 254.2 L577.0 254.2 L577.5 254.2 L578.0 254.2 L578.5 254.1 L579.0 253.9 L579.5 253.9 L580.0 253.3 L580.5 253.6 L581.0 253.8 L581.5 254.2 L582.0 253.8 L582.5 253.9 L583.0 254.1 L583.5 253.0 L584.0 251.9 L584.5 252.0 L585.0 250.4 L585.5 251.6 L586.0 251.7 L586.5 250.6 L587.0 249.9 L587.5 252.3 L588.0 250.4 L588.5 251.3 L589.0 250.6 L589.5 252.7 L590.0 251.1 L590.5 251.4 L591.0 252.6 L591.5 251.5 L592.0 252.8 L592.5 251.3 L593.0 252.9 L593.5 253.9 L594.0 254.1 L594.5 253.0 L595.0 253.2 L595.5 252.5 L596.0 251.9 L596.5 252.5 L597.0 251.4 L597.5 252.0 L598.0 252.9 L598.5 250.9 L599.0 251.8 L599.5 252.2 L600.0 250.1 L600.5 251.0 L601.0 251.4 L601.5 250.1 L602.0 250.2 L602.5 252.0 L603.0 250.2 L603.5 252.4 L604.0 253.1 L604.5 247.2 L605.0 247.2 L605.5 249.8 L606.0 250.4 L606.5 250.4 L607.0 252.2 L607.5 250.5 L608.0 251.8 L608.5 250.6 L609.0 251.2 L609.5 252.9 L610.0 252.0 L610.5 251.1 L611.0 250.7 L611.5 252.3 L612.0 252.4 L612.5 251.3 L613.0 251.4 L613.5 252.4 L614.0 251.4 L614.5 252.9 L615.0 251.8 L615.5 249.2 L616.0 249.2 L616.5 249.2 L617.0 251.9 L617.5 249.8 L618.0 251.5 L618.5 252.0 L619.0 251.8 L619.5 251.6 L620.0 251.5 L620.5 251.4 L621.0 252.9 L621.5 252.3 L622.0 251.7 L622.5 252.8 L623.0 253.4 L623.5 252.2 L624.0 252.5 L624.5 252.5 L625.0 250.9 L625.5 252.3 L626.0 252.9 L626.5 253.4 L627.0 252.5 L627.5 253.3 L628.0 253.0 L628.5 252.1 L629.0 252.8 L629.5 251.0 L630.0 252.3 L630.5 252.8 L631.0 253.1 L631.5 252.9 L632.0 253.1 L632.5 252.5 L633.0 253.2 L633.5 252.9 L634.0 253.1 L634.5 253.7 L635.0 253.7 L635.5 252.5 L636.0 253.0 L636.5 253.2 L637.0 253.2 L637.5 254.2 L638.0 254.2 L638.5 254.2 L639.0 254.2 L639.5 254.2 L640.0 254.2 L640.5 254.2 L641.0 254.1 L641.5 253.6 L642.0 253.1 L642.5 253.3 L643.0 253.3 L643.5 251.9 L644.0 252.5 L644.5 252.3 L645.0 250.1 L645.5 252.3 L646.0 252.5 L646.5 253.2 L647.0 253.3 L647.5 253.3 L648.0 252.2 L648.5 252.7 L649.0 253.0 L649.5 252.0 L650.0 251.8 L650.5 252.7 L651.0 253.5 L651.5 248.2 L652.0 248.2 L652.5 248.2 L653.0 252.0 L653.5 253.4 L654.0 253.5 L654.5 252.7 L655.0 252.9 L655.5 252.5 L656.0 253.0 L656.5 252.7 L657.0 251.8 L657.5 252.5 L658.0 253.7 L658.5 253.0 L659.0 253.8 L659.5 252.9 L660.0 253.5 L660.5 252.6 L661.0 252.6 L661.5 253.0 L662.0 253.4 L662.5 253.3 L663.0 253.7 L663.5 253.4 L664.0 253.7 L664.5 253.3 L665.0 253.5 L665.5 253.3 L666.0 253.4 L666.5 253.6 L667.0 253.7 L667.5 254.2 L668.0 254.2 L668.5 254.2 L669.0 254.2 L669.5 254.2 L670.0 254.2 L670.5 254.2 L671.0 254.2 L671.5 254.2 L672.0 254.2 L672.5 254.2 L673.0 254.2 L673.5 254.2 L674.0 254.2 L674.5 254.2 L675.0 254.2 L675.5 254.2 L676.0 254.2 L676.5 254.2 L677.0 254.2 L677.5 254.2 L678.0 254.2 L678.5 254.2 L679.0 254.2 L679.5 251.7 L680.0 251.7 L680.5 251.7 L681.0 254.2 L681.5 254.2 L682.0 254.2 L682.5 254.2 L683.0 254.2 L683.5 254.2 L684.0 254.2 L684.5 254.2 L685.0 254.2 L685.5 254.2 L686.0 254.2 L686.5 254.2 L687.0 254.2 L687.5 254.2 L688.0 254.2 L688.5 253.7 L689.0 253.1 L689.5 252.5 L690.0 252.5 L690.5 252.4 L691.0 251.5 L691.5 251.5 L692.0 251.5 L692.5 252.7 L693.0 252.5 L693.5 252.1 L694.0 252.1 L694.5 252.5 L695.0 252.6 L695.5 253.5 L696.0 253.3 L696.5 252.9 L697.0 253.6 L697.5 253.1 L698.0 252.3 L698.5 254.2 L699.0 254.2 L699.5 254.2 L700.0 254.2 L700.5 254.2 L701.0 253.6 L701.5 254.0 L702.0 253.2 L702.5 252.6 L703.0 252.9 L703.5 253.2 L704.0 252.8 L704.5 253.7 L705.0 253.2 L705.5 251.7 L706.0 251.7 L706.5 251.7 L707.0 253.7 L707.5 253.2 L708.0 253.5 L708.5 253.2 L709.0 253.3 L709.5 253.6 L710.0 253.8 L710.5 253.4 L711.0 253.6 L711.5 254.0 L712.0 253.9 L712.5 253.6 L713.0 253.3 L713.5 254.2 L714.0 254.2 L714.5 254.2 L715.0 254.2 L715.5 254.2 L716.0 254.2 L716.5 254.2 L717.0 254.2 L717.5 250.2 L718.0 250.2 L718.5 254.2 L719.0 254.2 L719.5 254.2 L720.0 254.2 L720.5 254.2 L721.0 254.2 L721.5 254.2 L722.0 254.2 L722.5 254.2 L723.0 254.2 L723.5 254.2 L724.0 254.2 L724.5 254.2 L725.0 254.2 L725.5 254.2 L726.0 254.2 L726.5 254.2 L727.0 254.2 L727.5 254.2 L728.0 254.2 L728.5 254.2 L729.0 254.2 L729.5 254.2 L730.0 254.2 L730.5 254.2 L731.0 254.2 L731.5 254.2 L732.0 254.2 L732.5 254.2 L733.0 254.2 L733.5 254.2 L734.0 254.2 L734.5 254.2 L735.0 254.2 L735.5 254.2 L736.0 254.2 L736.5 254.2 L737.0 254.2 L737.5 254.2 L738.0 254.2 L738.5 254.2 L739.0 254.2 L739.5 254.2 L740.0 254.2 L740.5 254.2 L741.0 254.2 L741.5 254.2 L742.0 254.2 L742.5 254.2 L743.0 254.2 L743.5 254.2 L744.0 254.2 L744.5 254.2 L745.0 254.2 L745.5 254.2 L746.0 254.2 L746.5 254.2 L747.0 254.2 L747.5 254.2 L748.0 254.2 L748.5 254.2 L749.0 254.2 L749.5 254.2 L750.0 254.2 L750.5 254.2 L751.0 254.2 L751.0 255.2 L750.5 255.2 L750.0 255.2 L749.5 255.2 L749.0 255.2 L748.5 255.2 L748.0 255.2 L747.5 255.2 L747.0 255.2 L746.5 255.2 L746.0 255.2 L745.5 255.2 L745.0 255.2 L744.5 255.2 L744.0 255.2 L743.5 255.2 L743.0 255.2 L742.5 255.2 L742.0 255.2 L741.5 255.2 L741.0 255.2 L740.5 255.2 L740.0 255.2 L739.5 255.2 L739.0 255.2 L738.5 255.2 L738.0 255.2 L737.5 255.2 L737.0 255.2 L736.5 255.2 L736.0 255.2 L735.5 255.2 L735.0 255.2 L734.5 255.2 L734.0 255.2 L733.5 255.2 L733.0 255.2 L732.5 255.2 L732.0 255.2 L731.5 255.2 L731.0 255.2 L730.5 255.2 L730.0 255.2 L729.5 255.2 L729.0 255.2 L728.5 255.2 L728.0 255.2 L727.5 255.2 L727.0 255.2 L726.5 255.2 L726.0 255.2 L725.5 255.2 L725.0 255.2 L724.5 255.2 L724.0 255.2 L723.5 255.2 L723.0 255.2 L722.5 255.2 L722.0 255.2 L721.5 255.2 L721.0 255.2 L720.5 255.2 L720.0 255.2 L719.5 255.2 L719.0 255.2 L718.5 255.2 L718.0 259.5 L717.5 259.5 L717.0 255.2 L716.5 255.2 L716.0 255.2 L715.5 255.2 L715.0 255.2 L714.5 255.2 L714.0 255.2 L713.5 255.2 L713.0 256.1 L712.5 255.8 L712.0 255.4 L711.5 255.3 L711.0 255.7 L710.5 256.1 L710.0 255.6 L709.5 255.9 L709.0 256.0 L708.5 256.2 L708.0 255.8 L707.5 256.1 L707.0 255.8 L706.5 257.6 L706.0 257.5 L705.5 257.5 L705.0 256.1 L704.5 255.7 L704.0 256.5 L703.5 256.2 L703.0 256.7 L702.5 256.8 L702.0 256.3 L701.5 255.4 L701.0 255.8 L700.5 255.2 L700.0 255.2 L699.5 255.2 L699.0 255.2 L698.5 255.2 L698.0 257.2 L697.5 256.4 L697.0 255.7 L696.5 256.6 L696.0 255.9 L695.5 256.0 L695.0 257.0 L694.5 257.0 L694.0 257.4 L693.5 257.2 L693.0 256.8 L692.5 256.8 L692.0 257.6 L691.5 257.7 L691.0 257.8 L690.5 256.8 L690.0 256.7 L689.5 256.8 L689.0 256.3 L688.5 255.6 L688.0 255.2 L687.5 255.2 L687.0 255.2 L686.5 255.2 L686.0 255.2 L685.5 255.2 L685.0 255.2 L684.5 255.2 L684.0 255.2 L683.5 255.2 L683.0 255.2 L682.5 255.2 L682.0 255.2 L681.5 255.2 L681.0 255.2 L680.5 257.9 L680.0 258.0 L679.5 257.8 L679.0 255.2 L678.5 255.2 L678.0 255.2 L677.5 255.2 L677.0 255.2 L676.5 255.2 L676.0 255.2 L675.5 255.2 L675.0 255.2 L674.5 255.2 L674.0 255.2 L673.5 255.2 L673.0 255.2 L672.5 255.2 L672.0 255.2 L671.5 255.2 L671.0 255.2 L670.5 255.2 L670.0 255.2 L669.5 255.2 L669.0 255.2 L668.5 255.2 L668.0 255.2 L667.5 255.2 L667.0 255.8 L666.5 255.9 L666.0 256.1 L665.5 256.2 L665.0 255.9 L664.5 256.2 L664.0 255.8 L663.5 255.9 L663.0 255.7 L662.5 255.9 L662.0 256.1 L661.5 256.4 L661.0 256.8 L660.5 256.9 L660.0 256.0 L659.5 256.5 L659.0 255.7 L658.5 256.3 L658.0 255.8 L657.5 256.9 L657.0 257.5 L656.5 256.7 L656.0 256.3 L655.5 256.7 L655.0 256.4 L654.5 256.6 L654.0 255.9 L653.5 256.0 L653.0 257.4 L652.5 261.8 L652.0 260.8 L651.5 260.9 L651.0 255.9 L650.5 256.5 L650.0 257.5 L649.5 257.4 L649.0 256.3 L648.5 256.7 L648.0 257.4 L647.5 256.0 L647.0 256.1 L646.5 256.1 L646.0 256.9 L645.5 257.3 L645.0 259.1 L644.5 257.2 L644.0 257.1 L643.5 257.3 L643.0 256.0 L642.5 256.0 L642.0 256.3 L641.5 255.7 L641.0 255.3 L640.5 255.2 L640.0 255.2 L639.5 255.2 L639.0 255.2 L638.5 255.2 L638.0 255.2 L637.5 255.2 L637.0 256.2 L636.5 256.1 L636.0 256.5 L635.5 257.0 L635.0 255.8 L634.5 255.7 L634.0 256.3 L633.5 256.4 L633.0 256.1 L632.5 256.8 L632.0 256.4 L631.5 256.5 L631.0 256.1 L630.5 256.5 L630.0 256.9 L629.5 258.4 L629.0 256.5 L628.5 257.1 L628.0 256.5 L627.5 256.0 L627.0 257.0 L626.5 256.0 L626.0 256.4 L625.5 257.2 L625.0 258.8 L624.5 256.8 L624.0 256.9 L623.5 257.1 L623.0 256.1 L622.5 256.6 L622.0 257.7 L621.5 257.2 L621.0 256.4 L620.5 258.2 L620.0 257.9 L619.5 257.8 L619.0 257.7 L618.5 257.4 L618.0 258.1 L617.5 259.5 L617.0 257.8 L616.5 260.0 L616.0 260.0 L615.5 259.9 L615.0 257.4 L614.5 256.5 L614.0 258.1 L613.5 257.2 L613.0 258.1 L612.5 258.0 L612.0 256.8 L611.5 257.1 L611.0 258.4 L610.5 258.4 L610.0 257.6 L609.5 256.6 L609.0 258.5 L608.5 258.5 L608.0 257.4 L607.5 259.1 L607.0 257.4 L606.5 259.0 L606.0 259.0 L605.5 259.1 L605.0 262.0 L604.5 262.8 L604.0 256.3 L603.5 257.2 L603.0 259.4 L602.5 257.5 L602.0 259.4 L601.5 259.5 L601.0 257.7 L600.5 258.3 L600.0 259.5 L599.5 257.2 L599.0 257.4 L598.5 258.7 L598.0 256.6 L597.5 257.3 L597.0 258.0 L596.5 256.9 L596.0 257.7 L595.5 256.9 L595.0 256.2 L594.5 256.4 L594.0 255.3 L593.5 255.6 L593.0 256.4 L592.5 257.9 L592.0 256.6 L591.5 258.0 L591.0 256.7 L590.5 258.0 L590.0 258.3 L589.5 256.6 L589.0 258.9 L588.5 258.4 L588.0 259.1 L587.5 256.9 L587.0 259.4 L586.5 258.6 L586.0 257.5 L585.5 257.9 L585.0 259.3 L584.5 257.7 L584.0 257.5 L583.5 256.3 L583.0 255.3 L582.5 255.4 L582.0 255.7 L581.5 255.2 L581.0 255.5 L580.5 255.9 L580.0 256.1 L579.5 255.4 L579.0 255.4 L578.5 255.3 L578.0 255.2 L577.5 255.2 L577.0 255.2 L576.5 255.2 L576.0 255.2 L575.5 255.2 L575.0 255.2 L574.5 255.2 L574.0 255.2 L573.5 255.2 L573.0 255.2 L572.5 255.2 L572.0 255.2 L571.5 255.2 L571.0 255.2 L570.5 255.2 L570.0 255.2 L569.5 255.2 L569.0 255.2 L568.5 255.2 L568.0 255.2 L567.5 255.2 L567.0 255.2 L566.5 255.2 L566.0 255.2 L565.5 255.2 L565.0 255.2 L564.5 255.2 L564.0 255.2 L563.5 255.2 L563.0 255.2 L562.5 255.2 L562.0 255.2 L561.5 255.2 L561.0 255.2 L560.5 255.2 L560.0 255.2 L559.5 255.2 L559.0 255.2 L558.5 255.2 L558.0 255.2 L557.5 255.2 L557.0 255.2 L556.5 255.2 L556.0 255.2 L555.5 255.2 L555.0 255.2 L554.5 255.2 L554.0 255.3 L553.5 255.5 L553.0 256.2 L552.5 255.5 L552.0 255.8 L551.5 256.0 L551.0 256.2 L550.5 256.6 L550.0 256.2 L549.5 256.1 L549.0 256.6 L548.5 260.7 L548.0 259.8 L547.5 256.5 L547.0 255.9 L546.5 255.6 L546.0 255.2 L545.5 255.2 L545.0 255.2 L544.5 255.2 L544.0 255.2 L543.5 255.2 L543.0 255.2 L542.5 255.2 L542.0 255.2 L541.5 255.7 L541.0 255.5 L540.5 255.6 L540.0 255.4 L539.5 255.8 L539.0 256.4 L538.5 255.5 L538.0 255.9 L537.5 255.8 L537.0 255.9 L536.5 255.9 L536.0 256.1 L535.5 255.8 L535.0 256.0 L534.5 255.6 L534.0 256.6 L533.5 256.7 L533.0 256.4 L532.5 255.9 L532.0 255.5 L531.5 255.2 L531.0 255.8 L530.5 257.2 L530.0 255.7 L529.5 256.6 L529.0 255.7 L528.5 256.8 L528.0 256.5 L527.5 256.4 L527.0 257.4 L526.5 257.4 L526.0 258.0 L525.5 257.8 L525.0 258.3 L524.5 257.7 L524.0 258.5 L523.5 258.1 L523.0 257.1 L522.5 258.2 L522.0 256.6 L521.5 256.9 L521.0 257.3 L520.5 256.6 L520.0 255.8 L519.5 255.2 L519.0 255.4 L518.5 255.2 L518.0 255.3 L517.5 255.2 L517.0 255.4 L516.5 255.6 L516.0 255.8 L515.5 255.8 L515.0 255.7 L514.5 255.5 L514.0 255.6 L513.5 255.4 L513.0 255.3 L512.5 255.2 L512.0 255.9 L511.5 257.1 L511.0 256.5 L510.5 256.8 L510.0 257.0 L509.5 257.2 L509.0 256.3 L508.5 257.2 L508.0 257.1 L507.5 258.1 L507.0 258.6 L506.5 257.4 L506.0 257.0 L505.5 259.5 L505.0 258.6 L504.5 258.6 L504.0 258.2 L503.5 259.7 L503.0 259.0 L502.5 258.5 L502.0 257.3 L501.5 256.0 L501.0 255.2 Z" fill="#d3e3f7"/>
<!-- playhead -->
<path d="M577.4 116 V290" stroke="#ffffff" stroke-width="1.6"/>
<path d="M563.8 88.9 H591.1 V102.4 L577.4 116.3 L563.8 102.4 Z" fill="#3d3d3f" stroke="#e8e8e8" stroke-width="1.3" stroke-linejoin="round"/>
</svg>
<div class="a txt" style="left:385.3px;top:89px;font-size:11.5px;color:#c4c4c4">1</div><div class="a txt" style="left:498.1px;top:89px;font-size:11.5px;color:#c4c4c4">2</div><div class="a txt" style="left:610.8px;top:89px;font-size:11.5px;color:#c4c4c4">3</div><div class="a txt" style="left:723.5px;top:89px;font-size:11.5px;color:#c4c4c4">4</div><div class="a txt" style="left:836.3px;top:89px;font-size:11.5px;color:#c4c4c4">5</div>
<div class="a txt" style="left:388.5px;top:127.7px;font-size:12.3px;color:#5fa4f2">Lead Vocals</div>
<div class="a txt" style="left:613.3px;top:127.7px;font-size:12.3px;color:#5fa4f2">Lead Vocals</div>
<div class="a txt" style="left:501.3px;top:214.5px;font-size:12.3px;color:#eef4ff">Lead Vocals</div>

<!-- left panel -->
<div class="a" style="left:0;top:87px;width:380px;height:30px;background:#252729"></div>
<div class="a" style="left:0;top:117px;width:380px;height:1px;background:#161718"></div>
<div class="a" style="left:0;top:118px;width:380px;height:85.5px;background:#28292b"></div>
<div class="a" style="left:0;top:203.5px;width:380px;height:85.5px;background:#4b4c4e"></div>
<div class="a" style="left:0;top:289px;width:380px;height:1px;background:#1f2122"></div>
<div class="a txt" style="left:16px;top:132.5px;font-size:14px;color:#dcdcdc">Lead Vocals</div>
<div class="a txt" style="left:16px;top:219px;font-size:14px;color:#dcdcdc">Lead Vocals</div>
<svg class="a" style="left:0;top:118px" width="380" height="172" viewBox="0 118 380 172">
<g id="mute1">
<path d="M16 171.2 Q16 170 17.2 169.8 L29.4 164.2 Q30.9 163.6 30.9 165.2 V182.8 Q30.9 184.4 29.4 183.8 L17.2 179.4 Q16 179.2 16 178 Z" fill="#d8d8d8"/>
<path d="M14.2 164.5 L35.2 185.6" stroke="#28292b" stroke-width="3.6"/>
<path d="M14.5 164.8 L35 185.3" stroke="#d8d8d8" stroke-width="1.4" stroke-linecap="round"/>
</g>
<g fill="none" stroke="#d8d8d8" stroke-width="1.7">
<path d="M62.4 180.3 V174.5 Q62.4 163.9 73.2 163.9 Q84.1 163.9 84.1 174.5 V180.3"/>
</g>
<rect x="64.1" y="175.9" width="5" height="9" rx="1.5" fill="#d8d8d8"/>
<rect x="77.5" y="175.9" width="5" height="9" rx="1.5" fill="#d8d8d8"/>
<g transform="translate(0 86.7)">
<path d="M16 171.2 Q16 170 17.2 169.8 L29.4 164.2 Q30.9 163.6 30.9 165.2 V182.8 Q30.9 184.4 29.4 183.8 L17.2 179.4 Q16 179.2 16 178 Z" fill="#d8d8d8"/>
<path d="M14.2 164.5 L35.2 185.6" stroke="#4b4c4e" stroke-width="3.6"/>
<path d="M14.5 164.8 L35 185.3" stroke="#d8d8d8" stroke-width="1.4" stroke-linecap="round"/>
<path d="M62.4 180.3 V174.5 Q62.4 163.9 73.2 163.9 Q84.1 163.9 84.1 174.5 V180.3" fill="none" stroke="#d8d8d8" stroke-width="1.7"/>
<rect x="64.1" y="175.9" width="5" height="9" rx="1.5" fill="#d8d8d8"/>
<rect x="77.5" y="175.9" width="5" height="9" rx="1.5" fill="#d8d8d8"/>
</g>
<rect x="113" y="167.8" width="155" height="13" rx="6.5" fill="#1c1d1e"/>
<rect x="113" y="254.6" width="155" height="13" rx="6.5" fill="#2d2e30"/>
<rect x="116.8" y="256.6" width="66.6" height="4" rx="1" fill="#52cc5e"/>
<rect x="116.8" y="262.3" width="66.6" height="4" rx="1" fill="#52cc5e"/>
<circle cx="218.6" cy="174.4" r="10.3" fill="#4a4a4c" stroke="#cfcfcf" stroke-width="1.4"/>
<circle cx="218.6" cy="261.2" r="10.3" fill="#4e4e50" stroke="#cfcfcf" stroke-width="1.4"/>
</svg>
<svg class="a" style="left:308px;top:128px" width="34" height="68" viewBox="0 0 34 68">
<defs><linearGradient id="mb1" x1="0" x2="1"><stop offset="0" stop-color="#9a9a9a"/><stop offset="0.3" stop-color="#e4e4e4"/><stop offset="0.65" stop-color="#c4c4c4"/><stop offset="1" stop-color="#6e6e6e"/></linearGradient>
<linearGradient id="mg1" x1="0" x2="1"><stop offset="0" stop-color="#737373"/><stop offset="0.6" stop-color="#7c7c7c"/><stop offset="0.85" stop-color="#5e5e5e"/><stop offset="1" stop-color="#3c3c3c"/></linearGradient></defs>
<rect x="9" y="1.3" width="14.8" height="64.5" rx="1.2" fill="url(#mb1)"/>
<rect x="9" y="1.3" width="14.8" height="18" rx="1" fill="url(#mg1)"/>
<rect x="9" y="19.3" width="14.8" height="4" fill="#d9d9d9"/>
<rect x="9" y="19.3" width="14.8" height="0.9" fill="#f4f4f4"/>
<rect x="15" y="20.6" width="2.6" height="1.6" fill="#555"/>
<rect x="9" y="56" width="14.8" height="1.6" fill="#7a7a7a"/>
<rect x="9" y="59.5" width="14.8" height="1.2" fill="#888"/>
<g stroke="#e6e6e6" stroke-width="0.85" fill="none">
<path d="M3.2 32.6 L16.2 43.8 L29.6 32.6"/>
<path d="M3.2 32.6 Q5.4 41 5.4 49 Q5.2 58 3.2 66.6 M29.6 32.6 Q27.4 41 27.4 49 Q27.6 58 29.6 66.6"/>
<path d="M3.2 66.6 L9.6 60.5 M29.6 66.6 L23.2 60.5"/>
<path d="M2.2 49.4 H30.6"/>
<path d="M16.2 43.8 L9.5 50.5 M16.2 43.8 L23.3 50.5"/>
</g>
</svg><svg class="a" style="left:308px;top:214.5px" width="34" height="68" viewBox="0 0 34 68">
<defs><linearGradient id="mb2" x1="0" x2="1"><stop offset="0" stop-color="#9a9a9a"/><stop offset="0.3" stop-color="#e4e4e4"/><stop offset="0.65" stop-color="#c4c4c4"/><stop offset="1" stop-color="#6e6e6e"/></linearGradient>
<linearGradient id="mg2" x1="0" x2="1"><stop offset="0" stop-color="#737373"/><stop offset="0.6" stop-color="#7c7c7c"/><stop offset="0.85" stop-color="#5e5e5e"/><stop offset="1" stop-color="#3c3c3c"/></linearGradient></defs>
<rect x="9" y="1.3" width="14.8" height="64.5" rx="1.2" fill="url(#mb2)"/>
<rect x="9" y="1.3" width="14.8" height="18" rx="1" fill="url(#mg2)"/>
<rect x="9" y="19.3" width="14.8" height="4" fill="#d9d9d9"/>
<rect x="9" y="19.3" width="14.8" height="0.9" fill="#f4f4f4"/>
<rect x="15" y="20.6" width="2.6" height="1.6" fill="#555"/>
<rect x="9" y="56" width="14.8" height="1.6" fill="#7a7a7a"/>
<rect x="9" y="59.5" width="14.8" height="1.2" fill="#888"/>
<g stroke="#e6e6e6" stroke-width="0.85" fill="none">
<path d="M3.2 32.6 L16.2 43.8 L29.6 32.6"/>
<path d="M3.2 32.6 Q5.4 41 5.4 49 Q5.2 58 3.2 66.6 M29.6 32.6 Q27.4 41 27.4 49 Q27.6 58 29.6 66.6"/>
<path d="M3.2 66.6 L9.6 60.5 M29.6 66.6 L23.2 60.5"/>
<path d="M2.2 49.4 H30.6"/>
<path d="M16.2 43.8 L9.5 50.5 M16.2 43.8 L23.3 50.5"/>
</g>
</svg>
<div class="a" style="left:373.5px;top:495px;width:3px;height:23px;border-radius:1.5px;background:#555759"></div>
<svg class="a" style="left:177px;top:834px" width="24" height="24" viewBox="0 0 24 24"><path d="M12 1 V23 M1 12 H23" stroke="#d0d0d0" stroke-width="1.6"/></svg>
<div class="a" style="left:471px;top:879.5px;width:338px;height:6px;border-radius:3px;background:#f2f2f2"></div>

<svg class="a" style="left:1257px;top:93px" width="16" height="16" viewBox="0 0 16 16"><path d="M7.5 1.2 V14.8 M1.5 8 H14" stroke="#c4c4c4" stroke-width="1.4"/></svg>
<!-- popover -->
<div class="a" style="left:857.6px;top:83.5px;width:401.7px;height:762.3px;border-radius:12.5px;background:#f2f2f7;box-shadow:0 0 110px 30px rgba(0,0,0,0.45)"></div>
<svg class="a" style="left:1160px;top:66px" width="56" height="20" viewBox="0 0 56 20"><path d="M6 18.2 Q12 18.2 15.5 14.8 L25.6 5.4 Q28 3.4 30.4 5.4 L40.5 14.8 Q44 18.2 50 18.2 V20 H6 Z" fill="#f2f2f7"/></svg>
<div class="a txt" style="left:857.6px;top:100.5px;width:401.7px;text-align:center;font-size:18px;font-weight:bold;color:#000;line-height:21px">Settings</div>
<div class="a" style="left:874.8px;top:137px;width:367.8px;height:47px;border-radius:10px;background:#fff"></div>
<div class="a" style="left:874.8px;top:222px;width:367.8px;height:188.2px;border-radius:10px;background:#fff"></div>
<div class="a" style="left:874.8px;top:448px;width:367.8px;height:188.5px;border-radius:10px;background:#fff"></div>
<div class="a" style="left:874.8px;top:674px;width:367.8px;height:47px;border-radius:10px;background:#fff"></div>
<div class="a" style="left:874.8px;top:758.8px;width:367.8px;height:47px;border-radius:10px;background:#fff"></div>
<div class="a txt" style="left:892.5px;top:137.8px;height:47px;line-height:47px;font-size:18px;color:#000;letter-spacing:0.2px">Metronome and Count-in</div><svg class="a" style="left:1215px;top:155.0px" width="11" height="13" viewBox="0 0 11 13"><path d="M2.2 1.2 L8 6.5 L2.2 11.8" stroke="#c4c4c7" stroke-width="1.9" fill="none" stroke-linecap="round" stroke-linejoin="round"/></svg><div class="a txt" style="left:892.5px;top:222.8px;height:47px;line-height:47px;font-size:18px;color:#000">Tempo</div><div class="a txt" style="right:74.5px;top:222.8px;height:47px;line-height:47px;font-size:18px;color:#8a8a8e;text-align:right">110</div><svg class="a" style="left:1215px;top:240.0px" width="11" height="13" viewBox="0 0 11 13"><path d="M2.2 1.2 L8 6.5 L2.2 11.8" stroke="#c4c4c7" stroke-width="1.9" fill="none" stroke-linecap="round" stroke-linejoin="round"/></svg><div class="a" style="left:892.5px;top:268px;width:350px;height:1px;background:#e0e0e4"></div><div class="a txt" style="left:892.5px;top:270.1px;height:47px;line-height:47px;font-size:18px;color:#000">Time Signature</div><div class="a txt" style="right:73px;top:270.1px;height:47px;line-height:47px;font-size:18px;color:#8a8a8e">4/4</div><svg class="a" style="left:1213px;top:285px" width="12" height="16" viewBox="0 0 12 16"><path d="M1.8 5.6 L6 1.6 L10.2 5.6 M1.8 10.4 L6 14.4 L10.2 10.4" stroke="#8a8a8e" stroke-width="1.6" fill="none" stroke-linecap="round" stroke-linejoin="round"/></svg><div class="a" style="left:892.5px;top:315.5px;width:350px;height:1px;background:#e0e0e4"></div><div class="a txt" style="left:892.5px;top:317.3px;height:47px;line-height:47px;font-size:18px;color:#000">Key Signature</div><div class="a txt" style="right:74.5px;top:317.3px;height:47px;line-height:47px;font-size:18px;color:#8a8a8e;text-align:right">C major</div><svg class="a" style="left:1215px;top:334.5px" width="11" height="13" viewBox="0 0 11 13"><path d="M2.2 1.2 L8 6.5 L2.2 11.8" stroke="#c4c4c7" stroke-width="1.9" fill="none" stroke-linecap="round" stroke-linejoin="round"/></svg><div class="a" style="left:892.5px;top:363px;width:350px;height:1px;background:#e0e0e4"></div><div class="a txt" style="left:892.5px;top:364.3px;height:47px;line-height:47px;font-size:18px;color:#000">Time Ruler</div><div class="a" style="left:1171.3px;top:371.0px;width:53.5px;height:32.5px;border-radius:16.5px;background:#e9e9eb"></div><div class="a" style="left:1171.8px;top:371.8px;width:30.6px;height:30.6px;border-radius:50%;background:#fff;border:0.8px solid #d6d6d6;box-shadow:0 1px 3px rgba(0,0,0,0.12)"></div><div class="a txt" style="left:892.5px;top:448.8px;height:47px;line-height:47px;font-size:18px;color:#000">Fade Out</div><div class="a" style="left:1171.3px;top:455.5px;width:53.5px;height:32.5px;border-radius:16.5px;background:#e9e9eb"></div><div class="a" style="left:1171.8px;top:456.3px;width:30.6px;height:30.6px;border-radius:50%;background:#fff;border:0.8px solid #d6d6d6;box-shadow:0 1px 3px rgba(0,0,0,0.12)"></div><div class="a" style="left:892.5px;top:494px;width:350px;height:1px;background:#e0e0e4"></div><div class="a txt" style="left:892.5px;top:495.8px;height:47px;line-height:47px;font-size:18px;color:#000">Note Pad</div><svg class="a" style="left:1215px;top:513.0px" width="11" height="13" viewBox="0 0 11 13"><path d="M2.2 1.2 L8 6.5 L2.2 11.8" stroke="#c4c4c7" stroke-width="1.9" fill="none" stroke-linecap="round" stroke-linejoin="round"/></svg><div class="a" style="left:892.5px;top:541.5px;width:350px;height:1px;background:#e0e0e4"></div><div class="a txt" style="left:892.5px;top:542.8px;height:47px;line-height:47px;font-size:18px;color:#000">Jam Session</div><div class="a txt" style="right:74.5px;top:542.8px;height:47px;line-height:47px;font-size:18px;color:#8a8a8e;text-align:right;letter-spacing:0.35px">Not connected</div><svg class="a" style="left:1215px;top:560.0px" width="11" height="13" viewBox="0 0 11 13"><path d="M2.2 1.2 L8 6.5 L2.2 11.8" stroke="#c4c4c7" stroke-width="1.9" fill="none" stroke-linecap="round" stroke-linejoin="round"/></svg><div class="a" style="left:892.5px;top:589px;width:350px;height:1px;background:#e0e0e4"></div><div class="a txt" style="left:892.5px;top:590.3px;height:47px;line-height:47px;font-size:18px;color:#000">Advanced</div><svg class="a" style="left:1215px;top:607.5px" width="11" height="13" viewBox="0 0 11 13"><path d="M2.2 1.2 L8 6.5 L2.2 11.8" stroke="#c4c4c7" stroke-width="1.9" fill="none" stroke-linecap="round" stroke-linejoin="round"/></svg><div class="a txt" style="left:874.8px;top:675.6px;width:367.8px;height:47px;line-height:47px;text-align:center;font-size:18px;color:#2a7ad2">Restore Purchase</div><div class="a" style="left:892px;top:766.8px;width:31px;height:31px;border-radius:7px;background:#fad12d"></div>
<svg class="a" style="left:892px;top:766.8px" width="31" height="31" viewBox="0 0 31 31">
<path d="M15.8 23 V10.5 Q15.8 7.6 19.8 7.6 Q24.8 7.6 24.8 10.5 V22.4 Q19.8 21 15.8 23.2 Q11.8 21 6.8 22.4 V10.5 Q6.8 7.6 11.8 7.6 Q15.8 7.6 15.8 10.5" stroke="#1e1a0e" stroke-width="1.85" fill="none" stroke-linejoin="round"/>
</svg>
<div class="a txt" style="left:940px;top:759.6px;height:47px;line-height:47px;font-size:18px;color:#000">Help</div>
</body></html>
